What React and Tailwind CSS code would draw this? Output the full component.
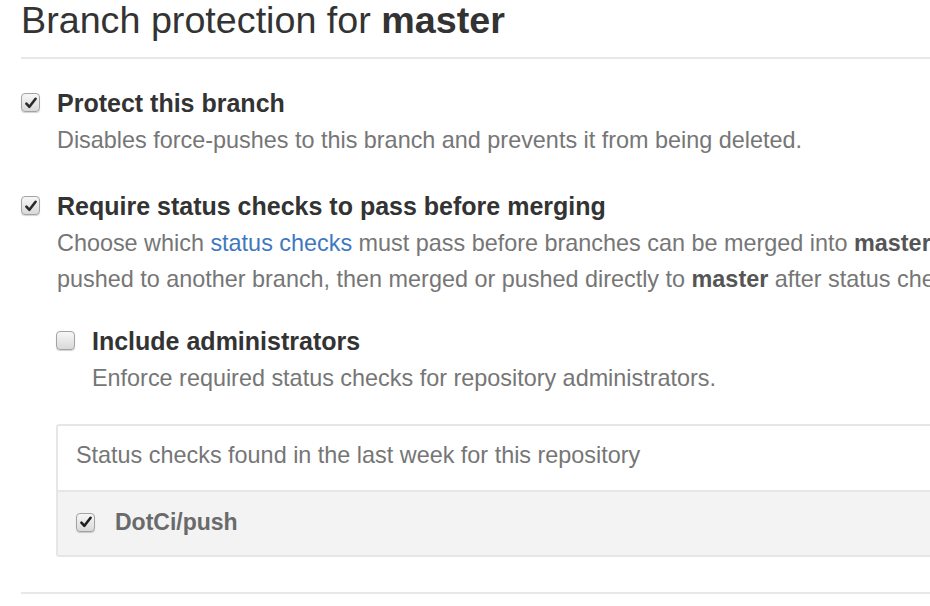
import React from "react";

function Box({ checked, dark }) {
  return (
    <div className="w-[19px] h-[19px] shrink-0 rounded-[4px] border border-[#a3a3a3] bg-gradient-to-b from-[#f7f7f7] to-[#d9d9d9] shadow-[0_1px_1px_rgba(0,0,0,0.18)] flex items-center justify-center">
      {checked && (
        <svg width="14" height="14" viewBox="0 0 14 14">
          <path
            d="M2.4 7.6 L5.4 10.8 L11.6 2.8"
            fill="none"
            stroke={dark ? "#1e1e1e" : "#2a2a2a"}
            strokeWidth="2.6"
            strokeLinecap="round"
            strokeLinejoin="round"
          />
        </svg>
      )}
    </div>
  );
}

export default function App() {
  return (
    <div
      className="w-[930px] h-[606px] overflow-hidden bg-white pl-[21px]"
      style={{ fontFamily: '"Liberation Sans", Arial, sans-serif' }}
    >
      <div className="w-[1200px]">
        <div className="pb-[17px] border-b-2 border-[#e8e8e8]">
          <h1 className="text-[37.7px] leading-[40px] text-[#333] font-normal whitespace-nowrap">
            Branch protection for <b className="font-bold">master</b>
          </h1>
        </div>

        {/* Protect this branch */}
        <div className="mt-[26px] flex">
          <div className="w-[36px] shrink-0 pt-[8px]">
            <Box checked />
          </div>
          <div className="min-w-0">
            <div className="text-[25px] leading-[37px] font-bold text-[#333] whitespace-nowrap">
              Protect this branch
            </div>
            <div className="text-[23.4px] leading-[36px] text-[#767676] whitespace-nowrap">
              Disables force-pushes to this branch and prevents it from being deleted.
            </div>
          </div>
        </div>

        {/* Require status checks */}
        <div className="mt-[30px] flex">
          <div className="w-[36px] shrink-0 pt-[8px]">
            <Box checked />
          </div>
          <div className="min-w-0 flex-1">
            <div className="text-[25px] leading-[37px] font-bold text-[#333] whitespace-nowrap">
              Require status checks to pass before merging
            </div>
            <div className="text-[23.4px] leading-[36px] text-[#767676] whitespace-nowrap">
              Choose which <span className="text-[#4078c0]">status checks</span> must pass before branches can be merged into{" "}
              <b className="font-bold text-[#555]">master</b>. When enabled, commits must first be
            </div>
            <div className="text-[23.4px] leading-[36px] text-[#767676] whitespace-nowrap">
              pushed to another branch, then merged or pushed directly to{" "}
              <b className="font-bold text-[#555]">master</b> after status checks have passed.
            </div>

            {/* Include administrators */}
            <div className="mt-[26px] ml-[-1px] flex">
              <div className="w-[36px] shrink-0 pt-[8px]">
                <Box />
              </div>
              <div className="min-w-0">
                <div className="text-[25px] leading-[37px] font-bold text-[#333] whitespace-nowrap">
                  Include administrators
                </div>
                <div className="text-[23.4px] leading-[36px] text-[#767676] whitespace-nowrap">
                  Enforce required status checks for repository administrators.
                </div>
              </div>
            </div>

            <div className="mt-[28px] ml-[-1px] border-2 border-[#e6e6e6] rounded-[3px]">
              <div className="h-[64px] pl-[18px] pb-[4px] flex items-center text-[23.4px] text-[#767676] whitespace-nowrap">
                Status checks found in the last week for this repository
              </div>
              <div className="h-[65px] border-t-2 border-[#e6e6e6] bg-[#f3f3f3] pl-[18px] pb-[3px] flex items-center">
                <Box checked dark />
                <span className="ml-[20px] text-[23px] font-bold text-[#6a6a6a] whitespace-nowrap">
                  DotCi/push
                </span>
              </div>
            </div>
          </div>
        </div>

        <div className="mt-[35px] border-t-2 border-[#e8e8e8]" />
      </div>
    </div>
  );
}
